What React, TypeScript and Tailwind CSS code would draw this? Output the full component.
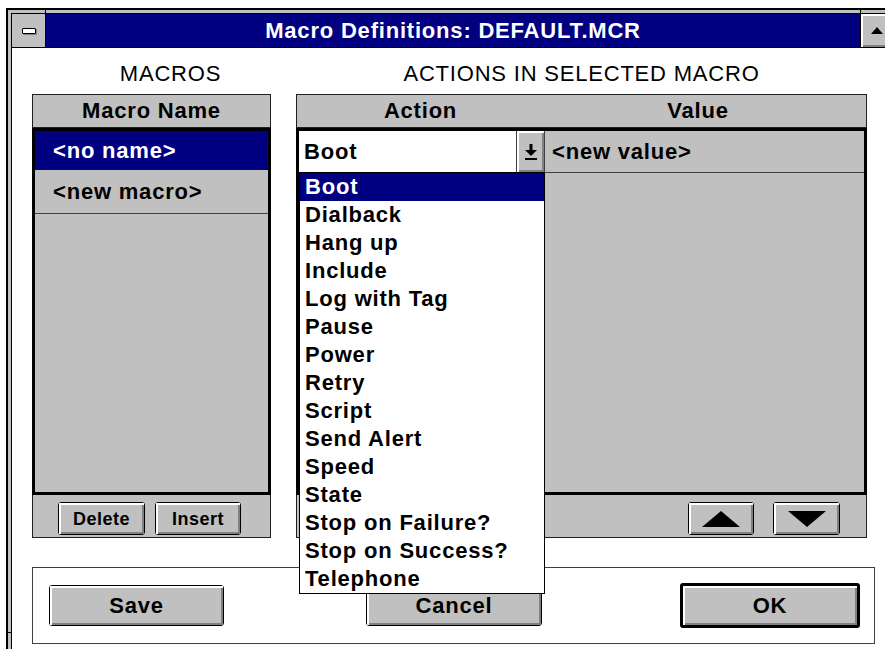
import React from "react";

const ACTIONS = [
  "Boot",
  "Dialback",
  "Hang up",
  "Include",
  "Log with Tag",
  "Pause",
  "Power",
  "Retry",
  "Script",
  "Send Alert",
  "Speed",
  "State",
  "Stop on Failure?",
  "Stop on Success?",
  "Telephone",
];

function Bevel({
  className = "",
  children,
  thick = false,
}: {
  className?: string;
  children?: React.ReactNode;
  thick?: boolean;
}) {
  return (
    <div
      className={`shrink-0 rounded-[3px] bg-[#c0c0c0] ${
        thick ? "border-[3px]" : "border"
      } border-black ${className}`}
    >
      <div className="flex h-full w-full items-center justify-center shadow-[inset_2px_2px_0_#ffffff,inset_-2px_-2px_0_#808080]">
        {children}
      </div>
    </div>
  );
}

function DropArrow() {
  return (
    <svg width="14" height="20" viewBox="0 0 14 20">
      <rect x="5.5" y="2" width="3" height="6" fill="#000" />
      <polygon points="1,8 13,8 7,14" fill="#000" />
      <rect x="1" y="16" width="12" height="2" fill="#000" />
    </svg>
  );
}

function Triangle({ up }: { up: boolean }) {
  return (
    <svg width="40" height="18" viewBox="0 0 40 18">
      {up ? (
        <polygon points="1,17 39,17 20,1" fill="#000" />
      ) : (
        <polygon points="1,1 39,1 20,17" fill="#000" />
      )}
    </svg>
  );
}

export default function App() {
  return (
    <div className="relative h-[649px] w-[885px] overflow-hidden bg-white font-['Liberation_Sans',Arial,Helvetica,sans-serif] text-black">
      {/* window frame */}
      <div className="ml-[6px] mt-[8px] w-[892px] border-2 border-black bg-[#c0c0c0] p-[3px]">
        <div className="flex flex-col border border-black bg-white">
          {/* caption */}
          <div className="flex h-[34px] border-b border-black">
            <div className="flex w-[34px] items-center justify-center border-r border-black bg-[#c0c0c0]">
              <div className="h-[6px] w-[14px] rounded-[1px] border border-black bg-white shadow-[1px_1px_0_#808080]" />
            </div>
            <div className="flex flex-1 items-center justify-center bg-[#000080] text-[22px] leading-none font-bold tracking-[0.8px] text-white">
              Macro Definitions: DEFAULT.MCR
            </div>
            <div className="w-[32px] border-l border-black">
              <div className="flex h-full w-full items-center justify-center bg-[#c0c0c0] shadow-[inset_2px_2px_0_#ffffff,inset_-2px_-2px_0_#808080]">
                <svg width="12" height="7" viewBox="0 0 12 7">
                  <polygon points="0,7 12,7 6,0" fill="#000" />
                </svg>
              </div>
            </div>
          </div>

          <div className="flex flex-col px-[20px] pb-[20px]">
            {/* section titles */}
            <div className="flex h-[46px] gap-[25px] pt-[14px] text-[22px] leading-[24px] tracking-[0.8px]">
              <div className="w-[239px] pl-[38px] text-center">MACROS</div>
              <div className="w-[571px] text-center">ACTIONS IN SELECTED MACRO</div>
            </div>

            <div className="flex items-start gap-[25px]">
              {/* macro list */}
              <div className="flex w-[239px] flex-col">
                <div className="flex h-[34px] items-center justify-center border border-[#202020] bg-[#c0c0c0] text-[22px] leading-none font-bold tracking-[0.8px]">
                  Macro Name
                </div>
                <div className="h-[367px] border-[3px] border-black bg-[#c0c0c0] text-[22px] leading-none font-bold tracking-[0.8px]">
                  <div className="flex h-[39px] items-center bg-[#000080] pl-[18px] text-white">
                    &lt;no name&gt;
                  </div>
                  <div className="flex h-[44px] items-center border-b border-[#404040] pl-[18px]">
                    &lt;new macro&gt;
                  </div>
                </div>
                <div className="flex h-[43px] items-start gap-[10px] border-x border-b border-[#202020] bg-[#c0c0c0] pt-[7px] pl-[25px] text-[18px] leading-none font-bold tracking-[0.5px]">
                  <Bevel className="h-[33px] w-[87px]">Delete</Bevel>
                  <Bevel className="h-[33px] w-[86px]">Insert</Bevel>
                </div>
              </div>

              {/* action grid */}
              <div className="relative flex w-[571px] flex-col">
                <div className="flex h-[34px] items-center border border-[#202020] bg-[#c0c0c0] text-[22px] leading-none font-bold tracking-[0.8px]">
                  <div className="w-[247px] text-center">Action</div>
                  <div className="flex-1 pr-[14px] text-center">Value</div>
                </div>
                <div className="h-[367px] border-[3px] border-black bg-[#c0c0c0] text-[22px] leading-none font-bold tracking-[0.8px]">
                  <div className="flex h-[42px] border-b border-[#404040]">
                    <div className="flex w-[246px] border-r border-[#404040]">
                      <div className="flex flex-1 items-center bg-white pl-[5px]">Boot</div>
                      <div className="h-full w-[28px] border-l border-[#404040] bg-[#c0c0c0]">
                        <div className="flex h-full w-full items-center justify-center shadow-[inset_2px_2px_0_#ffffff,inset_-2px_-2px_0_#808080]">
                          <DropArrow />
                        </div>
                      </div>
                    </div>
                    <div className="flex flex-1 items-center pl-[7px]">&lt;new value&gt;</div>
                  </div>
                </div>
                <div className="flex h-[43px] items-start justify-end gap-[19px] border-x border-b border-[#202020] bg-[#c0c0c0] pt-[7px] pr-[26px]">
                  <Bevel className="h-[33px] w-[66px]">
                    <Triangle up />
                  </Bevel>
                  <Bevel className="h-[33px] w-[67px]">
                    <Triangle up={false} />
                  </Bevel>
                </div>

                {/* open action list */}
                <div className="absolute top-[78px] left-[3px] z-10 w-[246px] border border-black bg-white text-[22px] leading-none font-bold tracking-[0.8px]">
                  {ACTIONS.map((a, i) => (
                    <div
                      key={a}
                      className={`flex h-[28px] items-center pl-[5px] ${
                        i === 0 ? "bg-[#000080] text-white" : ""
                      }`}
                    >
                      {a}
                    </div>
                  ))}
                </div>
              </div>
            </div>

            {/* command buttons */}
            <div className="mt-[29px] flex h-[77px] w-[843px] items-center border border-[#404040] pl-[16px] text-[22px] leading-none font-bold tracking-[0.8px]">
              <Bevel className="h-[41px] w-[175px]">Save</Bevel>
              <Bevel className="ml-[142px] h-[41px] w-[176px]">Cancel</Bevel>
              <Bevel thick className="ml-[138px] h-[45px] w-[180px]">
                OK
              </Bevel>
            </div>
          </div>
        </div>
      </div>

      {/* sizing-border notches */}
      <div className="absolute top-[8px] left-[45px] h-[6px] w-px bg-black" />
      <div className="absolute top-[8px] left-[860px] h-[6px] w-px bg-black" />
      <div className="absolute top-[632px] left-[6px] h-px w-[6px] bg-black" />
    </div>
  );
}
